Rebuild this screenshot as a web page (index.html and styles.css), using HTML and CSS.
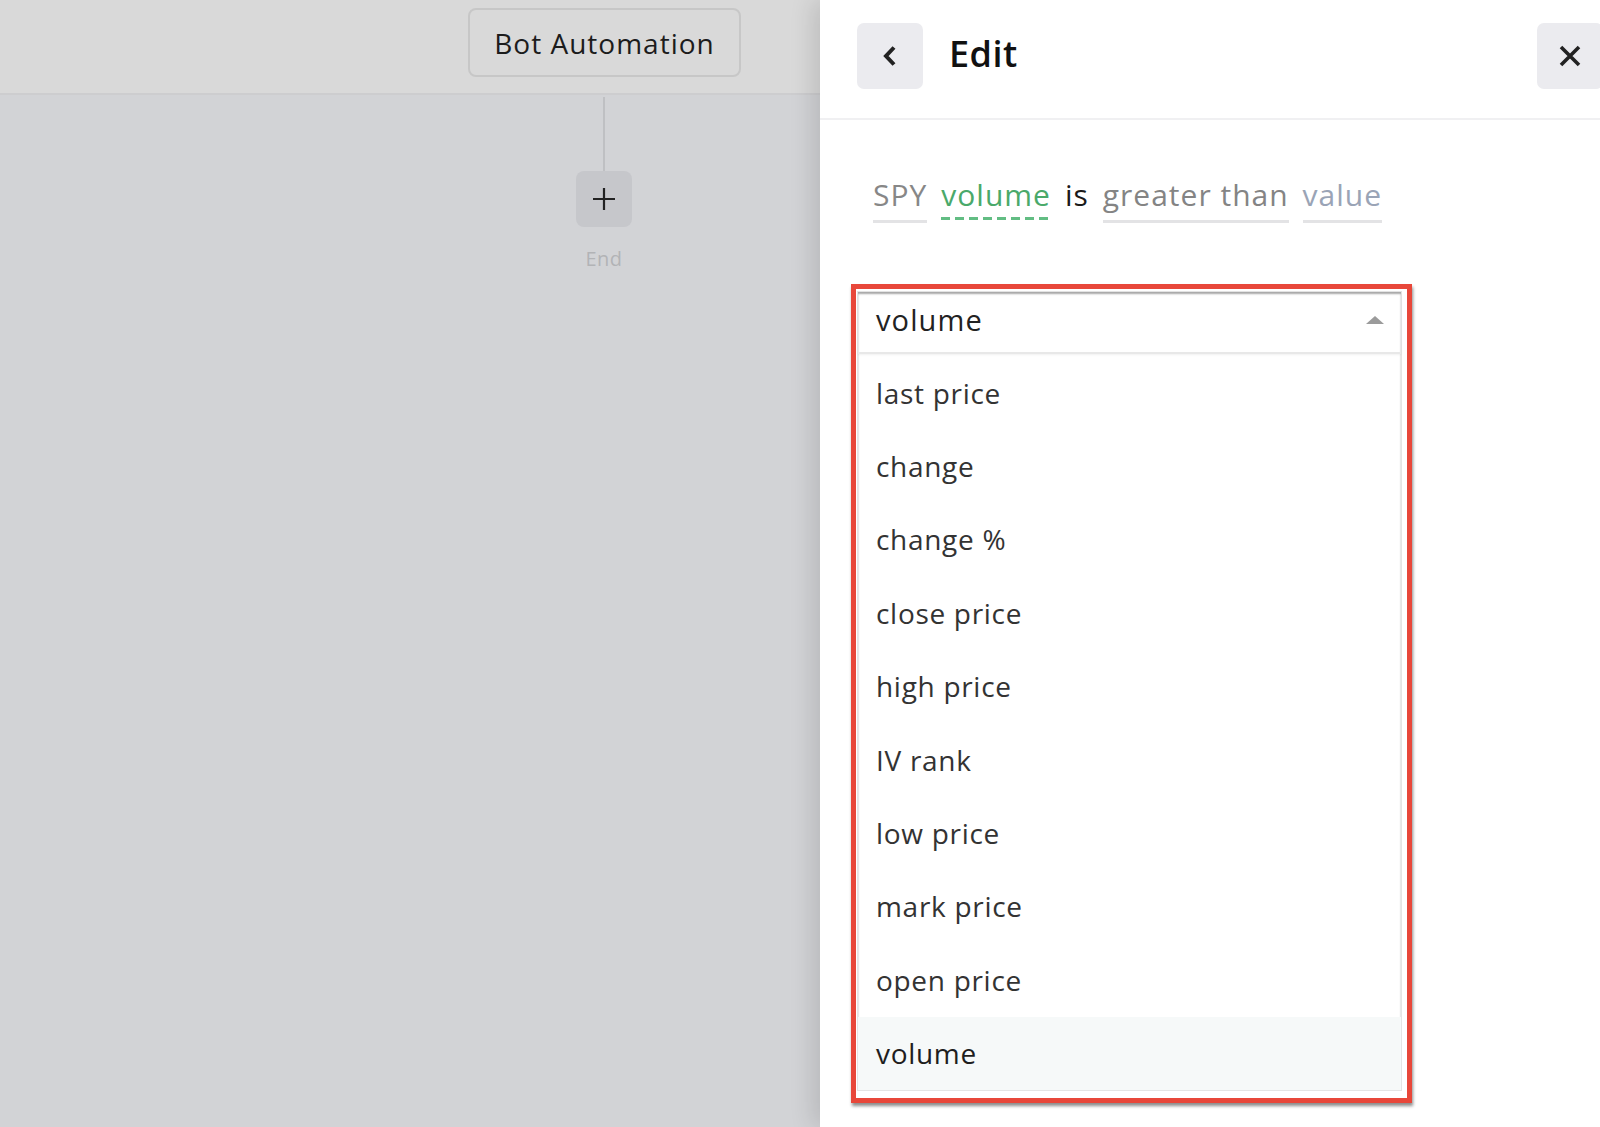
FILE: index.html
```html
<!DOCTYPE html>
<html lang="en">
<head>
    <meta charset="UTF-8">
    <meta name="viewport" content="width=device-width, initial-scale=1.0">
    <title>Bot Automation - Edit</title>
    <link rel="stylesheet" href="styles.css">
</head>
<body>
    <div class="canvas">
        <div class="topbar">
            <div class="bot-title">Bot Automation</div>
        </div>
        <div class="flow">
            <div class="connector"></div>
            <button class="add-step">
                <svg width="26" height="26" viewBox="0 0 26 26"><path d="M13 2v22M2 13h22" stroke="#222" stroke-width="2.2" fill="none"/></svg>
            </button>
            <div class="end-label">End</div>
        </div>
    </div>

    <div class="panel">
        <div class="panel-header">
            <div class="header-left">
                <button class="icon-btn">
                    <svg width="18" height="24" viewBox="0 0 18 24"><path d="M13 3.5 5 12l8 8.5" stroke="#222" stroke-width="4" fill="none" stroke-linejoin="miter"/></svg>
                </button>
                <h1>Edit</h1>
            </div>
            <button class="icon-btn close-btn">
                <svg width="24" height="24" viewBox="0 0 24 24"><path d="M3 3l18 18M21 3 3 21" stroke="#222" stroke-width="3.6" fill="none"/></svg>
            </button>
        </div>

        <div class="panel-body">
            <div class="condition">
                <span class="token ticker">SPY</span>
                <span class="token field">volume</span>
                <span class="word">is</span>
                <span class="token operator">greater than</span>
                <span class="token value">value</span>
            </div>

            <div class="highlight-box">
                <div class="dropdown">
                    <div class="select">
                        <span>volume</span>
                        <span class="caret"></span>
                    </div>
                    <ul class="options">
                        <li>last price</li>
                        <li>change</li>
                        <li>change %</li>
                        <li>close price</li>
                        <li>high price</li>
                        <li>IV rank</li>
                        <li>low price</li>
                        <li>mark price</li>
                        <li>open price</li>
                        <li class="selected">volume</li>
                    </ul>
                </div>
            </div>
        </div>
    </div>
</body>
</html>
```

FILE: styles.css
```css
* {
    margin: 0;
    padding: 0;
    box-sizing: border-box;
    font-family: 'Open Sans', 'Noto Sans', sans-serif;
}

body {
    width: 1600px;
    height: 1127px;
    display: flex;
    overflow: hidden;
    background: #d2d3d6;
}

button {
    border: none;
    cursor: pointer;
}

/* left canvas, dimmed behind the panel */
.canvas {
    width: 820px;
    flex-shrink: 0;
    background: #d2d3d6;
}

.topbar {
    height: 95px;
    padding: 8px 0 0 468px;
    background: #d9d9d9;
    border-bottom: 2px solid #cdcdcf;
}

.bot-title {
    width: 273px;
    height: 69px;
    display: flex;
    align-items: center;
    justify-content: center;
    border: 2px solid #c7c7c7;
    border-radius: 8px;
    color: #1c1c1c;
    font-size: 28px;
    font-weight: 500;
    letter-spacing: 1px;
}

.flow {
    width: 100px;
    margin-left: 554px;
    display: flex;
    flex-direction: column;
    align-items: center;
}

.connector {
    width: 2px;
    height: 74px;
    margin-top: 2px;
    background: #bfc0c3;
}

.add-step {
    width: 56px;
    height: 56px;
    border-radius: 8px;
    background: #c6c7cb;
    display: flex;
    align-items: center;
    justify-content: center;
}

.end-label {
    margin-top: 18px;
    color: #b2b3b6;
    font-size: 20px;
    letter-spacing: 0.5px;
}

/* right side panel */
.panel {
    flex: 1;
    background: #fff;
    box-shadow: -8px 0 22px rgba(0, 0, 0, 0.12);
    overflow: hidden;
}

.panel-header {
    height: 120px;
    display: flex;
    justify-content: space-between;
    align-items: flex-start;
    padding: 23px 0 0 37px;
    border-bottom: 2px solid #f0f0f2;
}

.header-left {
    display: flex;
    align-items: center;
    gap: 26px;
}

.header-left h1 {
    margin-top: -5px;
}

.icon-btn {
    width: 66px;
    height: 66px;
    border-radius: 7px;
    background: #ebebef;
    display: flex;
    align-items: center;
    justify-content: center;
    flex-shrink: 0;
}

.close-btn {
    margin-right: -3px;
}

h1 {
    font-size: 36px;
    font-weight: 600;
    color: #111;
    letter-spacing: 0.5px;
}

.panel-body {
    padding: 57px 0 0 31px;
}

.condition {
    display: flex;
    align-items: flex-end;
    gap: 14px;
    padding-left: 22px;
    font-size: 30px;
    letter-spacing: 1px;
}

.token {
    line-height: 36px;
    padding-bottom: 7px;
    border-bottom: 3px solid #e3e3e5;
}

.ticker {
    color: #878787;
}

.field {
    color: #4aa96a;
    border-bottom-color: transparent;
    background: linear-gradient(90deg, #62bd83 9px, transparent 9px) left bottom / 14px 3px repeat-x;
}

.word {
    color: #1a1a1a;
    line-height: 36px;
    padding-bottom: 10px;
}

.operator {
    color: #848484;
}

.value {
    color: #9aa4b6;
}

/* annotation frame around the dropdown */
.highlight-box {
    width: 561px;
    margin-top: 61px;
    padding: 2px 5px 7px 1px;
    border: 5px solid #e8473a;
    box-shadow: 1px 3px 3px rgba(0, 0, 0, 0.45);
}

.dropdown {
    background: #fff;
    border: 1px solid #e4e4e4;
    box-shadow: inset 0 2px 2px rgba(0, 0, 0, 0.35);
}

.select {
    height: 62px;
    display: flex;
    align-items: center;
    justify-content: space-between;
    padding: 0 17px 5px 18px;
    font-size: 29px;
    letter-spacing: 1.1px;
    color: #222;
    border-bottom: 2px solid #e8e8e8;
    box-shadow: 0 1px 2px rgba(0, 0, 0, 0.06);
}

.caret {
    width: 0;
    height: 0;
    border-left: 9px solid transparent;
    border-right: 9px solid transparent;
    border-bottom: 8px solid #9b9b9b;
}

.options {
    list-style: none;
    padding-top: 2px;
}

.options li {
    height: 73.4px;
    display: flex;
    align-items: center;
    padding-left: 18px;
    font-size: 28px;
    letter-spacing: 0.7px;
    color: #333;
}

.options li.selected {
    background: #f6f9f9;
    color: #1e1e1e;
}
```
